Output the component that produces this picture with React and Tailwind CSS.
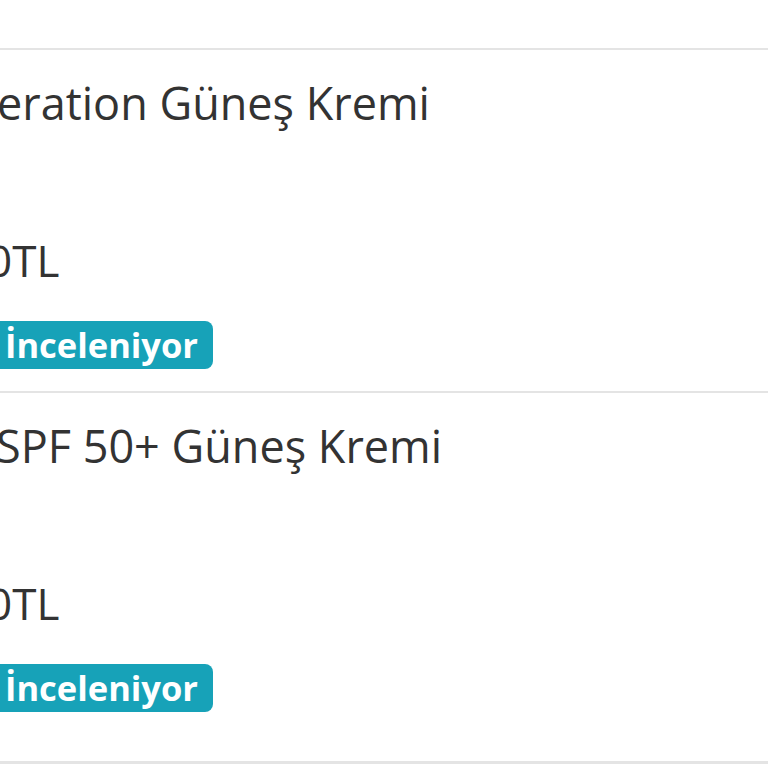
export default function App() {
  const items = [
    { title: "eration Güneş Kremi", titleMl: "-ml-[3px]", pb: "pb-[22px]" },
    { title: "SPF 50+ Güneş Kremi", titleMl: "-ml-[4px]", pb: "pb-[49px]" },
  ];
  return (
    <div
      className="w-[768px] h-[768px] overflow-hidden bg-white text-[#333333]"
      style={{ fontFamily: '"Open Sans", "Noto Sans", sans-serif' }}
    >
      <div className="h-[48px]" />
      {items.map((it, i) => (
        <div key={i} className={`border-t-[2px] border-[#e4e4e4] pt-[23px] ${it.pb} flex flex-col items-start`}>
          <div className={`text-[45px] leading-[60px] whitespace-nowrap ${it.titleMl}`}>{it.title}</div>
          <div className="text-[44px] leading-[60px] whitespace-nowrap -ml-[13px] mt-[97px]">0TL</div>
          <div className="mt-[31px] -ml-[9px] rounded-[8px] bg-[#17a2b8] text-white font-bold text-[34.5px] leading-[36px] py-[6px] pl-[14px] pr-[15px] whitespace-nowrap">
            İnceleniyor
          </div>
        </div>
      ))}
      <div className="border-t-[3px] border-[#e4e4e4]" />
    </div>
  );
}
